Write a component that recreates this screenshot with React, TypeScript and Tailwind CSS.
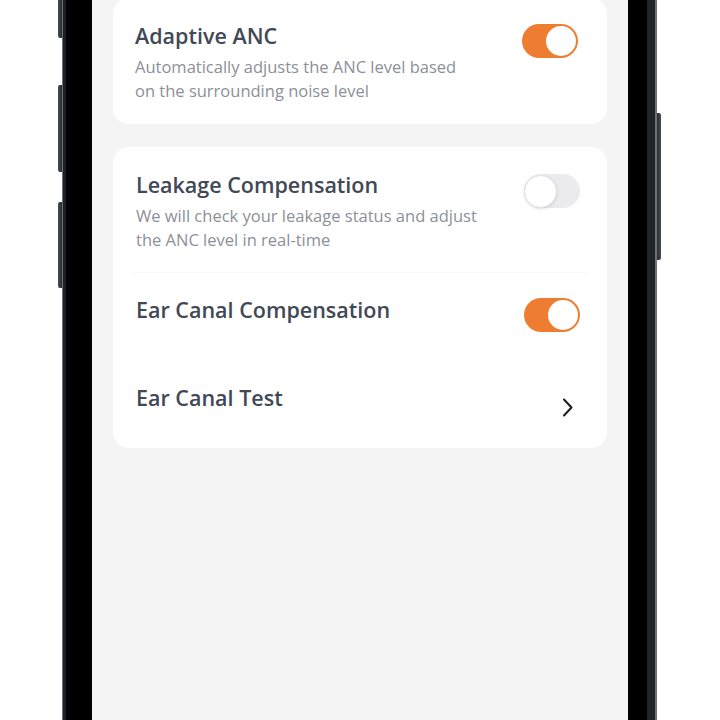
import React from "react";

type ToggleProps = { on: boolean };

function Toggle({ on }: ToggleProps) {
  if (on) {
    return (
      <div className="flex h-[34px] w-[56px] shrink-0 items-center justify-end rounded-full bg-[#ee7d31] p-[2px]">
        <div className="h-[30px] w-[30px] rounded-full bg-white" />
      </div>
    );
  }
  return (
    <div className="flex h-[34px] w-[56px] shrink-0 items-center justify-start rounded-full bg-[#ebebed]">
      <div className="h-[33px] w-[33px] rounded-full border border-[#e2e2e4] bg-white shadow-[0_1px_3px_rgba(0,0,0,0.12)]" />
    </div>
  );
}

function Chevron() {
  return (
    <svg width="12" height="19" viewBox="0 0 12 19" fill="none" className="block shrink-0">
      <path d="M2 1.5 L9.5 9.5 L2 17.5" stroke="#1c1c1e" strokeWidth="2" strokeLinecap="round" strokeLinejoin="round" />
    </svg>
  );
}

const titleCls = "text-[21.5px] leading-[28px] font-semibold text-[#414856]";
const descCls = "mt-[5px] max-w-[342px] text-[16.5px] leading-[24px] text-[#8c9099]";

export default function App() {
  return (
    <div
      className="flex h-[720px] w-[720px] overflow-hidden bg-white"
      style={{ fontFamily: '"Open Sans", "Noto Sans", sans-serif' }}
    >
      <div className="relative ml-[62px] flex h-full w-[595px]">
        {/* left side buttons */}
        <div className="absolute left-[-4px] top-[-10px] h-[48px] w-[4px] rounded-l-[2px] bg-gradient-to-r from-[#4a4d52] to-[#2a2c30]" />
        <div className="absolute left-[-4px] top-[85px] h-[87px] w-[4px] rounded-l-[2px] bg-gradient-to-r from-[#4a4d52] to-[#2a2c30]" />
        <div className="absolute left-[-4px] top-[202px] h-[86px] w-[4px] rounded-l-[2px] bg-gradient-to-r from-[#4a4d52] to-[#2a2c30]" />
        {/* right side button */}
        <div className="absolute right-[-4px] top-[113px] h-[147px] w-[4px] rounded-r-[2px] bg-gradient-to-l from-[#4a4d52] to-[#2a2c30]" />

        {/* left bezel */}
        <div className="w-px bg-[#6d7177]" />
        <div className="w-[3px] bg-[#1c1f24]" />
        <div className="w-[26px] bg-black" />

        {/* screen */}
        <div className="flex w-[536px] flex-col bg-[#f4f4f4] px-[21px]">
          {/* Adaptive ANC card */}
          <div className="-mt-[2px] flex items-start justify-between rounded-[16px] bg-white pb-[21px] pl-[22px] pr-[29px] pt-[24px]">
            <div>
              <div className={titleCls}>Adaptive ANC</div>
              <div className={descCls}>
                Automatically adjusts the ANC level based on the surrounding noise level
              </div>
            </div>
            <div className="mt-[2px]">
              <Toggle on />
            </div>
          </div>

          {/* Compensation card */}
          <div className="mt-[23px] flex flex-col rounded-[16px] bg-white">
            <div className="flex items-start justify-between pb-[20px] pl-[23px] pr-[27px] pt-[24px]">
              <div>
                <div className={titleCls}>Leakage Compensation</div>
                <div className={descCls}>
                  We will check your leakage status and adjust the ANC level in real-time
                </div>
              </div>
              <div className="mt-[3px]">
                <Toggle on={false} />
              </div>
            </div>

            <div className="mx-[20px] h-px bg-[#f9f9f9]" />

            <div className="flex items-start justify-between pl-[23px] pr-[27px] pt-[23px]">
              <div className={titleCls}>Ear Canal Compensation</div>
              <div className="mt-[2px]">
                <Toggle on />
              </div>
            </div>

            <div className="flex items-start justify-between pb-[31px] pl-[23px] pr-[33px] pt-[52px]">
              <div className={titleCls}>Ear Canal Test</div>
              <div className="mt-[14px]">
                <Chevron />
              </div>
            </div>
          </div>
        </div>

        {/* right bezel */}
        <div className="w-[19px] bg-black" />
        <div className="w-[8px] bg-[#202328]" />
        <div className="w-[2px] bg-[#6d7177]" />
      </div>
    </div>
  );
}
